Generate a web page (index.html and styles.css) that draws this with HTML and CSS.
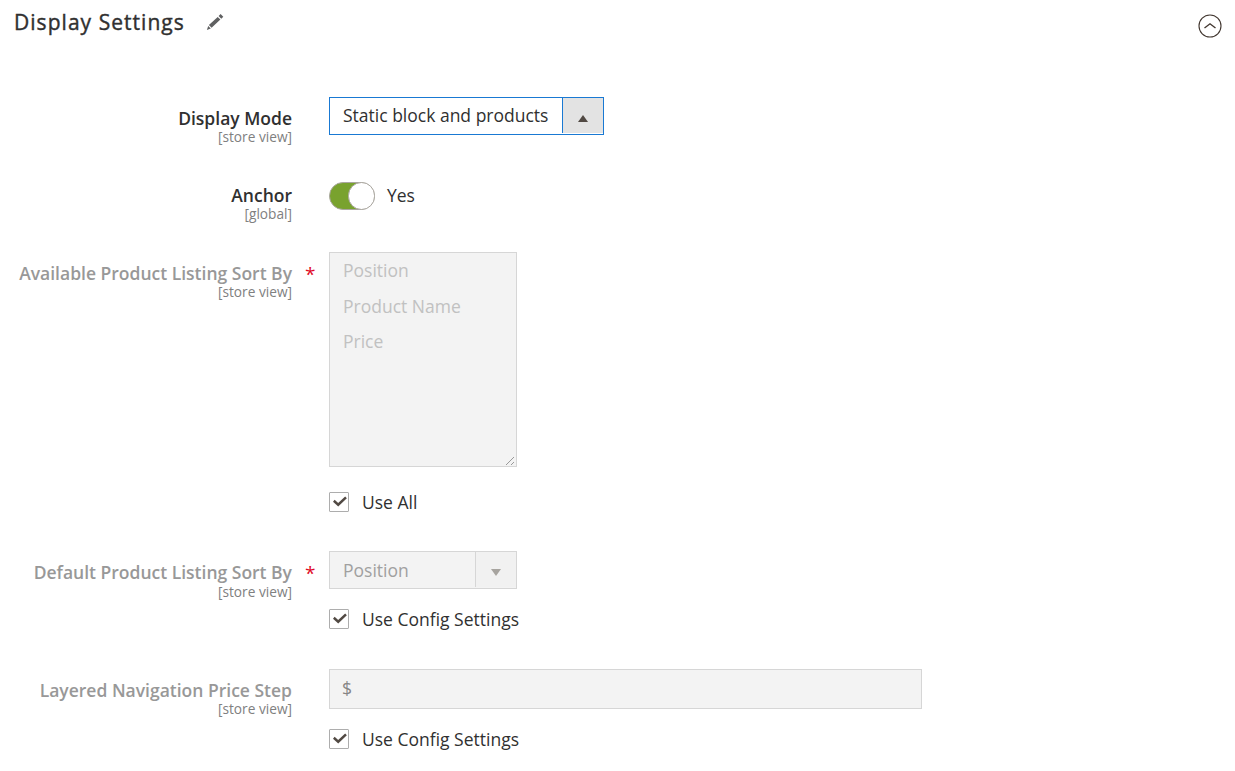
FILE: index.html
```html
<!DOCTYPE html>
<html lang="en">
<head>
<meta charset="utf-8">
<title>Display Settings</title>
<link rel="stylesheet" href="styles.css">
</head>
<body>
<header class="section-head">
  <h1 class="title">Display Settings</h1>
  <svg class="pencil" width="18" height="18" viewBox="0 0 18 18"><path d="M2.9 12 11.7 3.9 14.4 6.6 5.6 14.7zM12.6 3.1 14.6 1.1 17.3 3.8 15.3 5.8zM2.2 12.9 4.8 15.4 0.9 17z" fill="#5f6061"/></svg>
  <svg class="collapse" width="24" height="24" viewBox="0 0 24 24" fill="none" stroke="#41362f"><circle cx="12" cy="12" r="11" stroke-width="1.1"/><path d="M6.5 14 12 9.8 17.5 14" stroke-width="1.4"/></svg>
</header>
<main class="fields">
  <div class="row row-mode">
    <div class="label"><span class="name">Display Mode</span><span class="scope">[store view]</span></div>
    <div class="control">
      <div class="select active"><span class="value">Static block and products</span><span class="arrow"><svg width="10" height="7" viewBox="0 0 10 7"><path d="M0 7 5 0 10 7z" fill="#514943"/></svg></span></div>
    </div>
  </div>
  <div class="row row-anchor">
    <div class="label"><span class="name">Anchor</span><span class="scope">[global]</span></div>
    <div class="control switch-line"><span class="switch"><span class="knob"></span></span><span class="text">Yes</span></div>
  </div>
  <div class="row row-available disabled">
    <div class="label required"><span class="name">Available Product Listing Sort By</span><span class="scope">[store view]</span></div>
    <div class="control">
      <div class="listbox"><span>Position</span><span>Product Name</span><span>Price</span>
        <svg class="grip" width="10" height="10" viewBox="0 0 10 10" stroke="#999" fill="none"><path d="M1 9 9 1M6 9 9 6"/></svg></div>
      <div class="check-line"><span class="box"><svg width="14" height="12" viewBox="0 0 14 12"><path d="M.8 4.8 5.2 8.7 13 1.4" fill="none" stroke="#514943" stroke-width="2.5"/></svg></span><span class="text">Use All</span></div>
    </div>
  </div>
  <div class="row row-default disabled">
    <div class="label required"><span class="name">Default Product Listing Sort By</span><span class="scope">[store view]</span></div>
    <div class="control">
      <div class="select small"><span class="value">Position</span><span class="arrow"><svg width="10" height="7" viewBox="0 0 10 7"><path d="M0 0H10L5 7z" fill="#a7a49f"/></svg></span></div>
      <div class="check-line"><span class="box"><svg width="14" height="12" viewBox="0 0 14 12"><path d="M.8 4.8 5.2 8.7 13 1.4" fill="none" stroke="#514943" stroke-width="2.5"/></svg></span><span class="text">Use Config Settings</span></div>
    </div>
  </div>
  <div class="row row-step disabled">
    <div class="label"><span class="name">Layered Navigation Price Step</span><span class="scope">[store view]</span></div>
    <div class="control">
      <div class="price">$</div>
      <div class="check-line"><span class="box"><svg width="14" height="12" viewBox="0 0 14 12"><path d="M.8 4.8 5.2 8.7 13 1.4" fill="none" stroke="#514943" stroke-width="2.5"/></svg></span><span class="text">Use Config Settings</span></div>
    </div>
  </div>
</main>
</body>
</html>
```
FILE: styles.css
```css
* { box-sizing: border-box; }
body { margin: 0; width: 1235px; height: 771px; overflow: hidden; background: #fff; color: #303030; font-family: "Open Sans", "Noto Sans", sans-serif; font-size: 17.5px; line-height: 24px; }
svg { display: block; flex: none; }
.section-head { display: flex; align-items: flex-start; height: 97px; padding: 6px 13px 0 14px; }
.title { margin: 0; font-size: 21px; line-height: 32px; font-weight: 400; letter-spacing: 1.04px; -webkit-text-stroke: 0.4px #303030; white-space: nowrap; }
.pencil { margin: 7px 0 0 21px; }
.collapse { margin: 8px 0 0 auto; }
.fields { display: flex; flex-direction: column; }
.row { display: grid; grid-template-columns: 292px 593px; column-gap: 37px; align-items: start; }
.label { display: flex; flex-direction: column; align-items: flex-end; padding-top: 11px; white-space: nowrap; }
.name { font-weight: 600; line-height: 20px; font-size: 17.5px; }
.scope { font-size: 13.7px; line-height: 18px; color: #808080; }
.disabled .name { color: #989898; }
.required { position: relative; }
.required::after { content: "*"; position: absolute; left: 305px; top: 10px; color: #e00b27; font-size: 19px; line-height: 24px; }
.row-mode { height: 85px; }
.row-anchor { height: 70px; }
.row-anchor .label { padding-top: 3px; }
.row-available { height: 299px; }
.row-default { height: 118px; }
.row-default .scope { padding-top: 1px; }
.select { display: flex; width: 275px; height: 38px; border: 1px solid #1979d3; }
.value { flex: 1; padding: 5px 0 0 13px; white-space: nowrap; }
.arrow { display: flex; align-items: center; justify-content: center; width: 41px; height: 35px; padding-top: 6px; background: #e3e3e3; border-left: 1px solid #1979d3; }
.small { width: 188px; border-color: #d6d6d6; background: #f3f3f3; color: #a0a0a0; }
.small .value { padding-top: 6px; }
.small .arrow { background: #f1f1f1; border-color: #d6d6d6; }
.switch-line { display: flex; align-items: center; gap: 12px; height: 28px; }
.switch-line .text { padding-bottom: 2px; }
.switch { display: flex; justify-content: flex-end; width: 46px; height: 28px; border: 1px solid #aaa6a0; border-radius: 14px; background: #79a22e; }
.knob { width: 27px; height: 28px; margin: -1px -1px 0 0; border: 1px solid #aaa6a0; border-radius: 14px; background: #fff; }
.listbox { position: relative; display: flex; flex-direction: column; gap: 11.5px; width: 188px; height: 215px; padding: 5px 13px; border: 1px solid #d6d6d6; background: #f3f3f3; color: #c1c1c1; }
.grip { position: absolute; right: 1px; bottom: 0; }
.check-line { display: flex; align-items: center; gap: 13px; height: 20px; margin-top: 20px; }
.listbox + .check-line { margin-top: 25px; }
.box { display: flex; align-items: flex-start; justify-content: center; width: 20px; height: 20px; padding: 3px 0 0 1px; border: 1px solid #adadad; border-radius: 1px; }
.price { width: 593px; height: 40px; padding: 6px 12px; border: 1px solid #d6d6d6; background: #f3f3f3; color: #858585; }
```
